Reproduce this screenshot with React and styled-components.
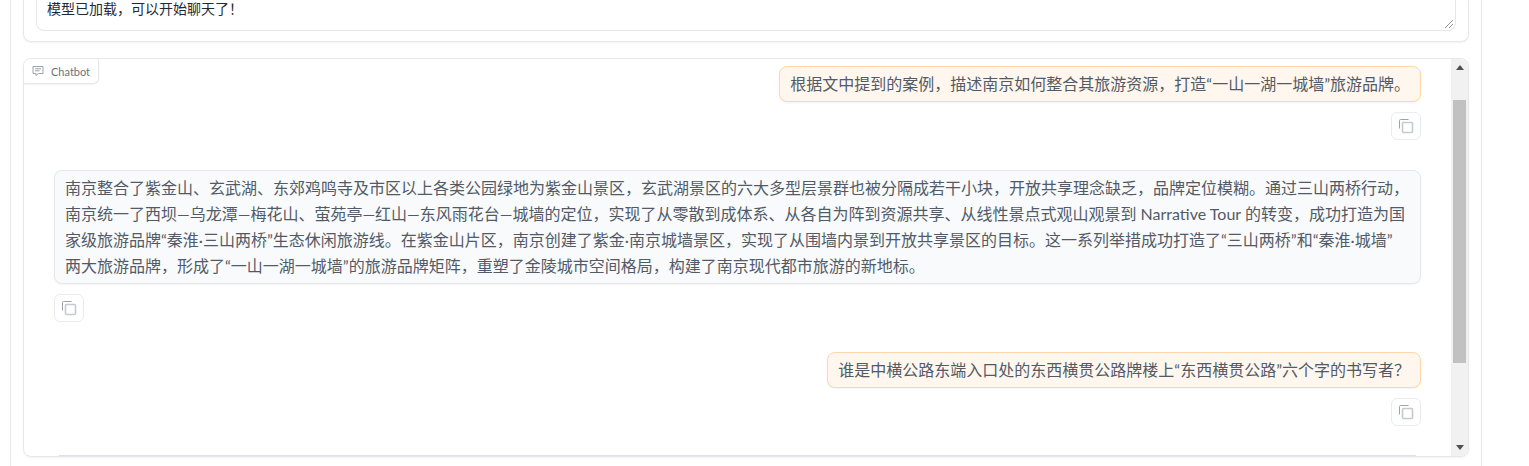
import styled, { createGlobalStyle } from "styled-components";

const GlobalStyle = createGlobalStyle`
  html, body {
    margin: 0;
    height: 100%;
    overflow: hidden;
    background: #fff;
    font-family: Lato, "Noto Sans CJK SC", sans-serif;
  }
`;

const Page = styled.div`
  box-sizing: border-box;
  width: 1472px;
  height: 466px;
  margin-left: 10px;
  padding: 0 12px 0 12px;
  border-left: 1px solid #e8e9ec;
  border-right: 1px solid #e8e9ec;
  display: flex;
  flex-direction: column;
  gap: 16px;
`;

const StatusCard = styled.div`
  box-sizing: border-box;
  height: 42px;
  padding: 0 12px 10px 12px;
  border: 1px solid #e5e7eb;
  border-top: 0;
  border-radius: 0 0 8px 8px;
  box-shadow: 0 1px 2px rgba(0, 0, 0, 0.05);
`;

const StatusBox = styled.div`
  position: relative;
  box-sizing: border-box;
  height: 31px;
  padding: 0 10px;
  border: 1px solid #e5e7eb;
  border-top: 0;
  border-radius: 0 0 8px 8px;
  font-size: 14px;
  line-height: 17px;
  color: #1f2937;
`;

const Grip = styled.svg`
  position: absolute;
  right: 1px;
  bottom: 1px;
`;

const ChatCard = styled.div`
  position: relative;
  box-sizing: border-box;
  height: 399px;
  display: flex;
  border: 1px solid #e5e7eb;
  border-radius: 8px;
  box-shadow: 0 1px 2px rgba(0, 0, 0, 0.05);
  overflow: hidden;

  &::after {
    content: "";
    position: absolute;
    left: 35px;
    right: 52px;
    bottom: 0;
    height: 1px;
    background: #dfe1e6;
  }
`;

const ChatTag = styled.div`
  position: absolute;
  top: 0;
  left: 0;
  display: flex;
  align-items: center;
  gap: 7px;
  height: 24px;
  padding: 0 8px;
  border-right: 1px solid #e5e7eb;
  border-bottom: 1px solid #e5e7eb;
  border-radius: 0 0 6px 0;
  box-shadow: 0 1px 2px rgba(0, 0, 0, 0.05);
  background: #fff;
  font-size: 11px;
  color: #6b7280;
`;

const Messages = styled.div`
  flex: 1;
  min-width: 0;
  box-sizing: border-box;
  padding: 7px 30px 0 30px;
  display: flex;
  flex-direction: column;
  overflow: hidden;
`;

const Row = styled.div`
  display: flex;
  flex-direction: column;
  align-items: ${(p) => (p.$user ? "flex-end" : "flex-start")};
  margin-bottom: ${(p) => p.$gap || 0}px;
`;

const Bubble = styled.div`
  box-sizing: border-box;
  width: ${(p) => (p.$user ? "auto" : "100%")};
  padding: 4px 10px;
  border-radius: 8px;
  border: 1px solid ${(p) => (p.$user ? "#fed7aa" : "#e5e7eb")};
  background: ${(p) => (p.$user ? "#fff7ed" : "#f9fafb")};
  box-shadow: 0 1px 2px rgba(0, 0, 0, 0.05);
  font-size: 16px;
  line-height: 26px;
  color: #525a67;
  white-space: nowrap;
`;

const CopyButton = styled.div`
  box-sizing: border-box;
  width: 30px;
  height: 28px;
  margin-top: 10px;
  display: flex;
  align-items: center;
  justify-content: center;
  border: 1px solid #e9ebee;
  border-radius: 6px;
  background: #fff;
`;

const Scrollbar = styled.div`
  width: 17px;
  flex: none;
  display: flex;
  flex-direction: column;
  background: #f1f1f1;
`;

const ScrollArrow = styled.div`
  height: 17px;
  flex: none;
  display: flex;
  align-items: center;
  justify-content: center;
`;

const ScrollTrack = styled.div`
  flex: 1;
  padding-top: 24px;
  padding-bottom: 76px;
  display: flex;
`;

const ScrollThumb = styled.div`
  flex: 1;
  margin: 0 2px;
  background: #c1c1c1;
`;

const CopyIcon = () => (
  <svg width="16" height="16" viewBox="0 0 16 16" fill="none">
    <path d="M1.500 10.500V2.500a1 1 0 0 1 1-1h8" stroke="#9ca3af" strokeWidth="1" />
    <rect x="4.500" y="4.500" width="10" height="10" rx="1" stroke="#c4c9d2" strokeWidth="1.600" />
  </svg>
);

const ChatIcon = () => (
  <svg width="12" height="12" viewBox="0 0 12 12" fill="none" stroke="#9ca3af" strokeWidth="1">
    <path d="M1 1.500h10v7H6.500L4 10.500V8.500H1z" />
    <path d="M3 3.800h6M3 5.800h4.500" />
  </svg>
);

const Arrow = ({ down }) => (
  <svg width="8" height="5" viewBox="0 0 8 5">
    <path d={down ? "M0 0h8L4 5z" : "M0 5h8L4 0z"} fill="#505050" />
  </svg>
);

const Message = ({ user, gap, children }) => (
  <Row $user={user} $gap={gap}>
    <Bubble $user={user}>{children}</Bubble>
    <CopyButton>
      <CopyIcon />
    </CopyButton>
  </Row>
);

const App = () => {
  return (
    <>
      <GlobalStyle />
      <Page>
        <StatusCard>
          <StatusBox>
            模型已加载，可以开始聊天了！
            <Grip width="10" height="10" viewBox="0 0 10 10" stroke="#777" strokeWidth="0.8">
              <path d="M1 9L9 1M5 9L9 5" />
            </Grip>
          </StatusBox>
        </StatusCard>
        <ChatCard>
          <ChatTag>
            <ChatIcon />
            Chatbot
          </ChatTag>
          <Messages>
            <Message user gap={30}>
              根据文中提到的案例，描述南京如何整合其旅游资源，打造“一山一湖一城墙”旅游品牌。
            </Message>
            <Message gap={30}>
              南京整合了紫金山、玄武湖、东郊鸡鸣寺及市区以上各类公园绿地为紫金山景区，玄武湖景区的六大多型层景群也被分隔成若干小块，开放共享理念缺乏，品牌定位模糊。通过三山两桥行动，
              <br />
              南京统一了西坝—乌龙潭—梅花山、萤苑亭—红山—东风雨花台—城墙的定位，实现了从零散到成体系、从各自为阵到资源共享、从线性景点式观山观景到 Narrative Tour 的转变，成功打造为国
              <br />
              家级旅游品牌“秦淮·三山两桥”生态休闲旅游线。在紫金山片区，南京创建了紫金·南京城墙景区，实现了从围墙内景到开放共享景区的目标。这一系列举措成功打造了“三山两桥”和“秦淮·城墙”
              <br />
              两大旅游品牌，形成了“一山一湖一城墙”的旅游品牌矩阵，重塑了金陵城市空间格局，构建了南京现代都市旅游的新地标。
            </Message>
            <Message user>谁是中横公路东端入口处的东西横贯公路牌楼上“东西横贯公路”六个字的书写者？</Message>
          </Messages>
          <Scrollbar>
            <ScrollArrow>
              <Arrow />
            </ScrollArrow>
            <ScrollTrack>
              <ScrollThumb />
            </ScrollTrack>
            <ScrollArrow>
              <Arrow down />
            </ScrollArrow>
          </Scrollbar>
        </ChatCard>
      </Page>
    </>
  );
};

export default App;
